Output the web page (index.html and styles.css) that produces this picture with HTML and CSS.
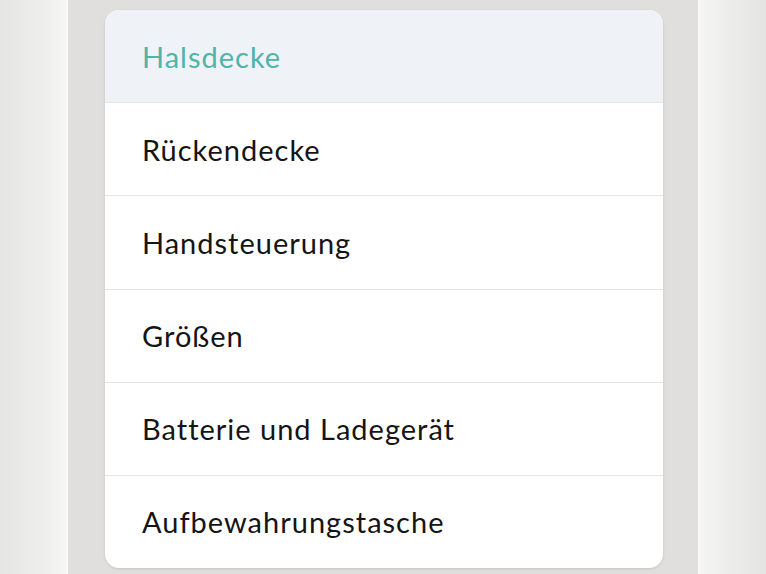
FILE: index.html
```html
<!DOCTYPE html>
<html lang="de">
<head>
    <meta charset="UTF-8">
    <title>Zubehör</title>
    <link rel="stylesheet" href="styles.css">
</head>
<body>
<div class="page">
    <div class="side side-left"></div>
    <main class="panel">
        <ul class="menu">
            <li class="menu-item active">Halsdecke</li>
            <li class="menu-item">Rückendecke</li>
            <li class="menu-item">Handsteuerung</li>
            <li class="menu-item">Größen</li>
            <li class="menu-item">Batterie und Ladegerät</li>
            <li class="menu-item">Aufbewahrungstasche</li>
        </ul>
    </main>
    <div class="side side-right"></div>
</div>
</body>
</html>
```

FILE: styles.css
```css
/* Basis */
* {
    margin: 0;
    padding: 0;
    box-sizing: border-box;
}

html, body {
    height: 100%;
}

body {
    font-family: Lato, "Noto Sans", sans-serif;
    background: #e1dfdd;
    overflow: hidden;
}

.page {
    display: flex;
    height: 100%;
}

/* Seitenstreifen */
.side {
    width: 68px;
    flex-shrink: 0;
}

.side-left {
    background: linear-gradient(to right, #e5e5e3, #efefed 70%, #f6f6f4 97%, #fbfbfa);
}

.side-right {
    background: linear-gradient(to right, #fbfbfa, #f5f5f3 4%, #eeeeec 40%, #e4e4e2);
}

/* Inhalt */
.panel {
    flex: 1;
    padding: 10px 35px 0 37px;
}

.menu {
    list-style: none;
    background: #fff;
    border-radius: 14px;
    overflow: hidden;
    box-shadow: 0 1px 3px rgba(0, 0, 0, 0.12);
}

.menu-item {
    height: 93.2px;
    display: flex;
    align-items: center;
    padding: 0 38px 0 37px;
    font-size: 29px;
    letter-spacing: 1px;
    color: #151515;
    border-bottom: 1px solid #e6e6e6;
}

.menu-item:last-child {
    height: 92px;
    border-bottom: none;
}

.menu-item.active {
    background: #eff3f7;
    color: #50b4a9;
}
```
